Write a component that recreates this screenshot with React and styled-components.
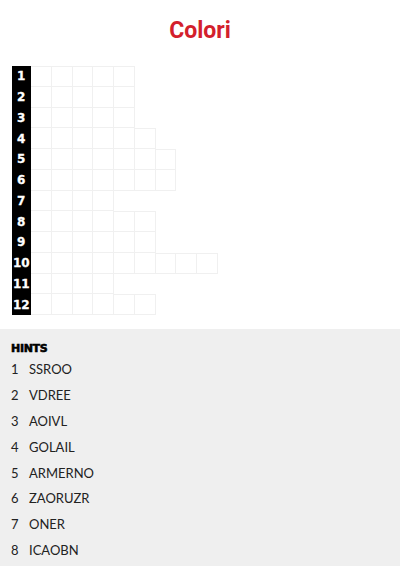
import React from "react";
import styled, { createGlobalStyle } from "styled-components";

const GlobalStyle = createGlobalStyle`
  body {
    margin: 0;
    background: #fff;
    font-family: Lato, "Open Sans", sans-serif;
  }
`;

const Page = styled.div`
  display: flex;
  flex-direction: column;
`;

const Title = styled.h1`
  margin: 0;
  padding-top: 17px;
  height: 66px;
  box-sizing: border-box;
  text-align: center;
  font-family: Roboto, sans-serif;
  font-weight: 700;
  font-size: 23px;
  line-height: 28px;
  color: #d3202c;
`;

const Grid = styled.div`
  display: flex;
  flex-direction: column;
  padding: 0 0 14px 11.5px;
`;

const Row = styled.div`
  display: flex;
  height: 20.75px;
`;

const Num = styled.div`
  width: 19.5px;
  background: #000;
  color: #fff;
  font-family: "DejaVu Sans", sans-serif;
  font-weight: 700;
  font-size: 12px;
  -webkit-text-stroke: 0.3px #fff;
  display: flex;
  align-items: center;
  justify-content: center;
`;

const Cell = styled.div`
  width: 20.75px;
  box-sizing: border-box;
  border-right: 1px solid #f0f0f0;
  border-bottom: 1px solid #f0f0f0;
  border-top: ${(p) => (p.$top ? "1px solid #f0f0f0" : "none")};
`;

const Hints = styled.div`
  background: #efefef;
  padding: 13px 11px 20px;
  min-height: 237px;
  box-sizing: border-box;
`;

const HintsTitle = styled.div`
  font-family: "DejaVu Sans", sans-serif;
  font-weight: 900;
  font-size: 11px;
  letter-spacing: -0.3px;
  color: #000;
  line-height: 14px;
  -webkit-text-stroke: 0.6px #000;
`;

const HintList = styled.ol`
  list-style: none;
  margin: 0;
  padding: 0;
`;

const Hint = styled.li`
  display: flex;
  height: 25.9px;
  align-items: center;
  font-size: 13px;
  color: #222;
`;

const HintNum = styled.span`
  width: 18px;
`;

const lengths = [5, 5, 5, 6, 7, 7, 4, 6, 6, 9, 4, 6];
const hints = ["SSROO", "VDREE", "AOIVL", "GOLAIL", "ARMERNO", "ZAORUZR", "ONER", "ICAOBN"];

function App() {
  return (
    <Page>
      <GlobalStyle />
      <Title>Colori</Title>
      <Grid>
        {lengths.map((len, i) => {
          const prev = i > 0 ? lengths[i - 1] : 0;
          return (
            <Row key={i}>
              <Num>{i + 1}</Num>
              {Array.from({ length: len }).map((_, j) => (
                <Cell key={j} $top={i === 0 || j >= prev} />
              ))}
            </Row>
          );
        })}
      </Grid>
      <Hints>
        <HintsTitle>HINTS</HintsTitle>
        <HintList>
          {hints.map((h, i) => (
            <Hint key={i}>
              <HintNum>{i + 1}</HintNum>
              {h}
            </Hint>
          ))}
        </HintList>
      </Hints>
    </Page>
  );
}

export default App;
